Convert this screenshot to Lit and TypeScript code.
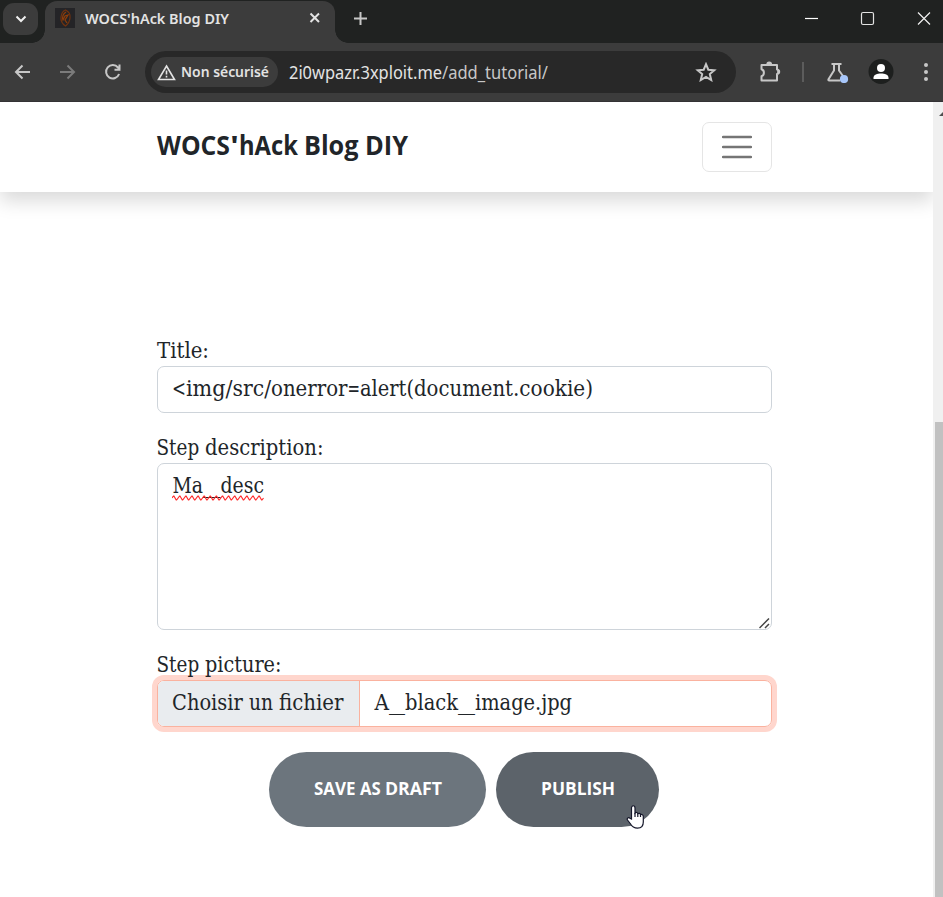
import { LitElement, html, svg, css } from "lit";
import { customElement, property } from "lit/decorators.js";

/**
 * A single line of text set to a given measure, on a given baseline.
 * With "stops", the text is cut at "|" and each piece runs from its stop to the next.
 */
@customElement("fit-text")
class FitText extends LitElement {
  @property() text = "";
  @property({ type: Number }) measure = 100;
  @property({ type: Number }) height = 20;
  @property({ type: Number }) baseline = 15;
  @property({ attribute: false }) stops: number[] = [0];
  static styles = css`
    :host { display: block; flex: none; }
    svg { display: block; overflow: visible; }
    text { fill: currentColor; white-space: pre; }
  `;
  render() {
    const ends = [...this.stops.slice(1), this.measure];
    return html`<svg width=${this.measure} height=${this.height}>
      ${this.text.split("|").map((part, i) => svg`<text x=${this.stops[i]} y=${this.baseline} textLength=${ends[i] - this.stops[i]} lengthAdjust="spacingAndGlyphs">${part}</text>`)}
    </svg>`;
  }
}

@customElement("browser-chrome")
class BrowserChrome extends LitElement {
  static styles = css`
    :host { display: block; height: 102px; background: #3c3c3c; color: #e3e3e3; font-family: "Noto Sans", sans-serif; }
    svg { display: block; flex: none; fill: none; stroke: #c7c7c7; stroke-width: 2; }
    .strip { height: 43px; background: #202221; display: flex; align-items: flex-start; box-sizing: border-box; padding-left: 3px; }
    .search { width: 35px; height: 32px; margin-top: 3px; border-radius: 11px; background: #3c3c3c; display: grid; place-items: center; }
    .tab { position: relative; width: 290px; height: 42px; margin: 1px 0 0 7px; border-radius: 12px 12px 0 0; background: #3c3c3c; display: flex; box-sizing: border-box; padding: 7px 14px 0 10px; }
    .tab::before, .tab::after { content: ""; position: absolute; bottom: 0; width: 13px; height: 13px; }
    .tab::before { right: 100%; background: radial-gradient(circle at 0 0, transparent 12.5px, #3c3c3c 13px); }
    .tab::after { left: 100%; background: radial-gradient(circle at 100% 0, transparent 12.5px, #3c3c3c 13px); }
    .title { margin-left: 10px; font-size: 15px; font-weight: 600; }
    .x { margin: 4px 0 0 auto; }
    .plus { margin: 11px 0 0 18px; }
    .win { margin: 11px 12px 0 auto; }
    .bar { height: 58px; display: flex; align-items: center; border-bottom: 1px solid #343235; padding-left: 14px; }
    .fwd { margin-left: 26px; }
    .reload { margin-left: 27px; }
    .omni { width: 591px; height: 42px; box-sizing: border-box; margin-left: 23px; border-radius: 21px; background: #282828; display: flex; align-items: center; padding: 0 19px 0 6px; }
    .chip { width: 127px; height: 30px; border-radius: 15px; background: #3c3c3c; display: flex; align-items: center; box-sizing: border-box; padding-left: 6px; gap: 5px; }
    .chip fit-text { font-size: 15px; font-weight: 600; }
    .url { display: flex; margin-left: 11px; font-size: 17.5px; }
    .path { color: #c7c7c7; }
    .star { margin-left: auto; }
    .ext { margin-left: 21px; }
    .sep { width: 2px; height: 20px; background: #5c5c5c; margin-left: 21px; }
    .flask { margin-left: 22px; }
    .avatar { margin-left: 19px; }
    .dots { margin-left: 29px; }
  `;
  render() {
    return html`
      <div class="strip">
        <div class="search"><svg width="12" height="8"><path d="M1.5 1.5 6 6l4.5-4.5" stroke="#f0f0f0"/></svg></div>
        <div class="tab">
          <svg width="20" height="20"><rect width="20" height="20" fill="#242427" stroke="none"/>
            <g stroke-width="1.200"><path d="M10.500 2c4 2 5 5 4.500 8-.3 4-2 6-4.500 8-3-2-5-5-4.500-9 .3-3 2-6 4.500-7z" stroke="#72330f"/>
            <path d="M11 4c-3 2-4 5-3 8l2-4 3-1-3 5 2 3" stroke="#923e08"/></g></svg>
          <fit-text class="title" text="WOCS'hAck Blog DIY" .measure=${144} .height=${20} .baseline=${16}></fit-text>
          <svg class="x" width="12" height="12"><path d="m1.500 1.500 8.500 8.500M10 1.500 1.500 10" stroke="#e3e3e3"/></svg>
        </div>
        <svg class="plus" width="15" height="15"><path d="M7.500 1v13M1 7.500h13"/></svg>
        <svg class="win" width="128" height="16"><g style="stroke-width:1.2"><path d="M2 7.500h13" stroke="#fff"/><rect x="58.500" y="1.500" width="12" height="12" rx="1.500" stroke="#e3e3e3"/><path d="m115 1.500 12 12m0-12-12 12" stroke="#f0f0f0"/></g></svg>
      </div>
      <div class="bar">
        <svg width="17" height="16"><path d="M16 8H2.500M8.500 1.500 2 8l6.500 6.500"/></svg>
        <svg class="fwd" width="20" height="16"><path d="M3 8h14M10.500 1.500 17 8l-6.500 6.500" stroke="#7b7b7b"/></svg>
        <svg class="reload" width="18" height="18"><path d="M15.100 11A6.700 6.700 0 1 1 14 4.500L15.800 7M10.500 6.800H15.500V1.500"/></svg>
        <div class="omni">
          <div class="chip">
            <svg width="19" height="17"><path d="M9.500 2 17.500 15.500h-16z" stroke="#e3e3e3" stroke-width="1.600"/><path d="M9.500 6.500v4m0 1.300v1.800" stroke="#e3e3e3" stroke-width="1.600"/></svg>
            <fit-text text="Non sécurisé" .measure=${88} .height=${20} .baseline=${15}></fit-text>
          </div>
          <div class="url">
            <fit-text text="2i0wpazr.3xploit.me" .measure=${153} .height=${22} .baseline=${18}></fit-text>
            <fit-text class="path" text="/add_tutorial/" .measure=${106} .height=${22} .baseline=${18}></fit-text>
          </div>
          <svg class="star" width="22" height="20"><path d="m11 2.200 2.300 5.500 6 .5-4.500 3.900 1.400 5.900-5.200-3.200L5.800 18l1.400-5.900-4.500-3.900 6-.5z"/></svg>
        </div>
        <svg class="ext" width="24" height="22"><path d="M4.500 4h15.500V8.500c1.800 0 1.800 4.500 0 4.500V19.500h-15.500v-4.300c3.200-1 3.200-6 0-7z" stroke-linejoin="round"/><path d="M9.300 3.500a2.900 2.900 0 0 1 5.800 0z M20.500 8a2.700 2.700 0 0 1 0 5.400z" fill="#c7c7c7" stroke="none"/></svg>
        <div class="sep"></div>
        <svg class="flask" width="23" height="22"><path d="M5.500 3h10M8 3v6.500L2.500 18.200c-.4.800 0 1.300.7 1.300H14M13 3v6.500l4 5.500"/><circle cx="18" cy="18" r="4.100" fill="#a8c7fa" stroke="none"/></svg>
        <svg class="avatar" width="26" height="26"><circle cx="13" cy="12.500" r="12.500" fill="#1d1f1e" stroke="none"/><circle cx="13" cy="9" r="4" fill="#fff" stroke="none"/><path d="M5.500 20v-1.500c0-5.500 15-5.500 15 0V20z" fill="#fff" stroke="none"/></svg>
        <svg class="dots" width="6" height="20"><g fill="#c7c7c7" stroke="none"><circle cx="3" cy="3" r="2"/><circle cx="3" cy="10" r="2"/><circle cx="3" cy="17" r="2"/></g></svg>
      </div>`;
  }
}

@customElement("tutorial-form")
class TutorialForm extends LitElement {
  static styles = css`
    :host { display: block; width: 615px; margin: 141px 0 0 157px; color: #212529; font-family: "DejaVu Serif Condensed", "DejaVu Serif", serif; font-stretch: condensed; font-size: 22px; }
    .field { margin-bottom: 17px; }
    .box { box-sizing: border-box; border: 1px solid #ced4da; border-radius: 7px; height: 47px; padding-left: 15px; }
    .area { height: 167px; position: relative; }
    .wave { display: block; margin: -14px 0 0 -1px; }
    .grip { position: absolute; right: 1px; bottom: 0; }
    .file { display: flex; padding: 0; border-color: #fab29f; box-shadow: 0 0 0 5px #ffd6cd; overflow: hidden; }
    .choose { width: 202px; box-sizing: border-box; padding-left: 14px; background: #e9ecef; border-right: 1px solid #fab29f; }
    .name { padding-left: 15px; }
    .actions { display: flex; gap: 10px; margin: 25px 0 0 112px; color: #fff; font: 700 18px "Open Sans", sans-serif; }
    .btn { height: 75px; border-radius: 38px; background: #6c757d; display: grid; place-items: center; width: 217px; }
    .publish { width: 163px; background: #5c636a; position: relative; }
    .hand { position: absolute; left: 130px; top: 53px; }
  `;
  render() {
    const wave = "M0 3" + Array.from({ length: 15 }, () => "l1.500 -2h.4l2.300 4h.4l1.500 -2").join("");
    return html`
      <div class="field">
        <fit-text text="Title:" .measure=${52} .height=${33} .baseline=${25}></fit-text>
        <div class="box"><fit-text text="<|img/|src/|onerror|=|alert(|document|.cookie)" .stops=${[-1, 13, 59.5, 98, 174.5, 187, 241, 340]} .measure=${420} .height=${45} .baseline=${29}></fit-text></div>
      </div>
      <div class="field">
        <fit-text text="Step |description:" .stops=${[-0.5, 48]} .measure=${166.5} .height=${33} .baseline=${25}></fit-text>
        <div class="box area">
          <fit-text text="Ma|_|desc" .stops=${[-0.5, 30, 47.5]} .measure=${91} .height=${45} .baseline=${29}></fit-text>
          <svg class="wave" width="92" height="6"><path d=${wave} fill="none" stroke="#ff2a2a" stroke-width="1.200"/></svg>
          <svg class="grip" width="11" height="11"><path d="M.500 10 10 .500M6 10l4-4" stroke="#444" stroke-width="1.500"/></svg>
        </div>
      </div>
      <div>
        <fit-text text="Step |picture:" .stops=${[-0.5, 48]} .measure=${124.5} .height=${33} .baseline=${25}></fit-text>
        <div class="box file">
          <div class="choose"><fit-text text="Choisir |un |fichier" .stops=${[0, 77, 107]} .measure=${171.5} .height=${45} .baseline=${29}></fit-text></div>
          <div class="name"><fit-text text="A|_|black|_|image.jpg" .stops=${[-0.5, 14, 30, 83, 100]} .measure=${197} .height=${45} .baseline=${29}></fit-text></div>
        </div>
      </div>
      <div class="actions">
        <div class="btn"><fit-text text="SAVE |AS |DRAFT" .stops=${[0, 46, 71]} .measure=${128} .height=${25} .baseline=${18}></fit-text></div>
        <div class="btn publish"><fit-text text="PUBLISH" .measure=${74} .height=${25} .baseline=${18}></fit-text>
          <svg class="hand" width="20" height="25"><path d="M5.500 14V3c0-3 3.500-3 3.500 0v5c1-1 2.500-.5 2.800.7 1-.8 2.500-.2 2.700.9 1.300-.5 2.800 0 2.800 1.900v5.500c0 4-2 6.200-5.800 6.200-4 0-5.500-1.500-7.300-4.700L1.500 15c-1-2 1-3 2.500-1.800z" fill="#fff" stroke="#15172a" stroke-width="1.200"/><path d="M9 8v4m2.800-3.500V12m2.700-2.500V12" stroke="#15172a" stroke-width="1.200"/></svg>
        </div>
      </div>`;
  }
}

@customElement("app-root")
class AppRoot extends LitElement {
  static styles = css`
    :host { display: block; width: 943px; height: 897px; overflow: hidden; background: #fff; }
    .view { display: flex; height: 795px; }
    .page { width: 933px; height: 795px; overflow: hidden; }
    .nav { height: 90px; box-sizing: border-box; display: flex; justify-content: space-between; align-items: center; padding: 0 161px 0 157px; box-shadow: 0 9px 18px rgba(0, 0, 0, 0.15); color: #212529; font: 700 26.5px "Open Sans", sans-serif; }
    .toggle { width: 70px; height: 50px; box-sizing: border-box; border: 1px solid #e5e5e5; border-radius: 7px; display: grid; place-items: center; }
    .scroll { width: 10px; background: #f0f0f0; overflow: hidden; }
    .arrow { display: block; height: 320px; }
    .thumb { height: 475px; margin-left: 2px; background: #c1c1c1; }
  `;
  render() {
    return html`
      <browser-chrome></browser-chrome>
      <div class="view">
        <div class="page">
          <div class="nav">
            <fit-text text="WOCS|'|hAck |Blog |DIY" .stops=${[0, 73, 82, 147, 208]} .measure=${251} .height=${36} .baseline=${26}></fit-text>
            <div class="toggle"><svg width="30" height="26"><path d="M1 3h28M1 13h28M1 23h28" stroke="#757575" stroke-width="2.300" stroke-linecap="round"/></svg></div>
          </div>
          <tutorial-form></tutorial-form>
        </div>
        <div class="scroll">
          <svg class="arrow" width="10" height="320"><path d="m6 14 5-5 5 5z" fill="#505050"/></svg>
          <div class="thumb"></div>
        </div>
      </div>`;
  }
}
